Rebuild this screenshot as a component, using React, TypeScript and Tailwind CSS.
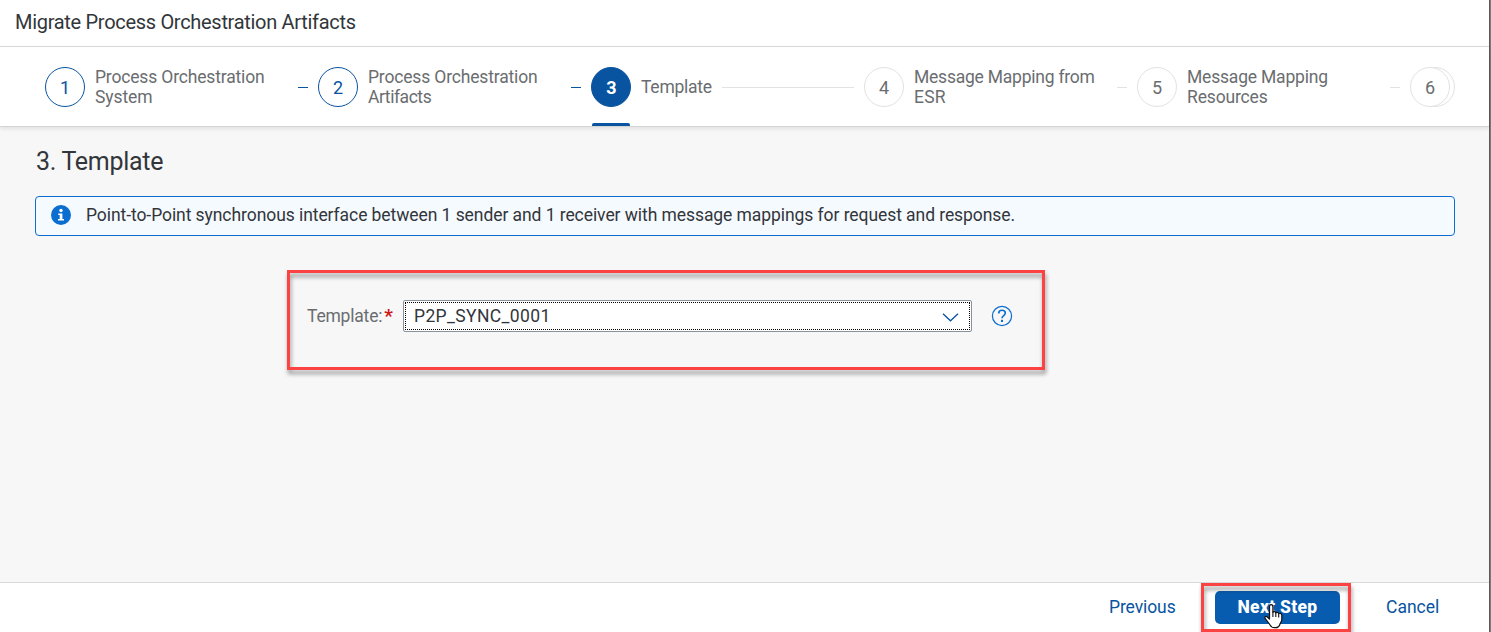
import { clsx } from "clsx";

type StepState = "done" | "current" | "open";

interface Step {
  number: number;
  lines: string[];
  state: StepState;
  tracking: string[];
}

const steps: Step[] = [
  { number: 1, lines: ["Process Orchestration", "System"], state: "done", tracking: ["tracking-[-0.17px]", "tracking-[-0.1px]"] },
  { number: 2, lines: ["Process Orchestration", "Artifacts"], state: "done", tracking: ["tracking-[-0.17px]", "tracking-[-0.45px]"] },
  { number: 3, lines: ["Template"], state: "current", tracking: ["tracking-[-0.25px]"] },
  { number: 4, lines: ["Message Mapping from", "ESR"], state: "open", tracking: ["tracking-[-0.23px]", "tracking-[0.2px]"] },
  { number: 5, lines: ["Message Mapping", "Resources"], state: "open", tracking: ["tracking-[-0.2px]", "tracking-[-0.15px]"] },
];

function StepCircle({ number, state }: { number: number; state: StepState }) {
  return (
    <span
      className={clsx(
        "flex size-10 shrink-0 items-center justify-center rounded-full border pt-px text-[18px]",
        state === "done" && "border-[#0854a0] bg-white text-[#0854a0]",
        state === "current" && "border-[#0854a0] bg-[#0854a0] pl-px font-bold text-white",
        state === "open" && "border-[#e2e2e2] bg-white text-[#6a6d70]",
      )}
    >
      {number}
    </span>
  );
}

function StepItem({ step }: { step: Step }) {
  return (
    <li className="relative flex w-[273px] shrink-0 items-center pr-[10px]">
      <StepCircle number={step.number} state={step.state} />
      <span className="ml-[10px] text-[17.5px] leading-5 whitespace-nowrap text-[#6a6d70]">
        {step.lines.map((line, i) => (
          <span key={line} className={clsx("block", step.tracking[i])}>
            {line}
          </span>
        ))}
      </span>
      <span
        className={clsx(
          "mt-px ml-auto h-px",
          step.number === 3 ? "w-[132px]" : "w-[10px]",
          step.state === "done" ? "bg-[#0854a0]" : "bg-[#e2e2e2]",
        )}
      />
      {step.state === "current" && (
        <span className="absolute top-[56px] left-px h-[3px] w-[38px] rounded-t-[2px] bg-[#0854a0]" />
      )}
    </li>
  );
}

function InfoIcon() {
  return (
    <svg className="mb-[2px] size-5" viewBox="0 0 20 20">
      <circle cx="10" cy="10" r="10" fill="#0a6ed1" />
      <circle cx="10" cy="5.5" r="1.7" fill="#fff" />
      <path d="M7.2 8.4H11.4V14H13V15.6H7V14H8.7V10H7.2Z" fill="#fff" />
    </svg>
  );
}

function HelpIcon() {
  return (
    <svg className="size-[22px]" viewBox="0 0 22 22" fill="none" stroke="#0a6ed1">
      <circle cx="11" cy="11" r="9.6" strokeWidth="1.2" />
      <path d="M7.7 8.4C7.7 6.3 9 5.3 11 5.3C13 5.3 14.3 6.4 14.3 8C14.3 9.5 13.5 10.1 12.5 10.8C11.5 11.5 11 12 11 13.2" strokeWidth="1.6" />
      <rect x="10" y="14.8" width="2" height="2.2" fill="#0a6ed1" stroke="none" />
    </svg>
  );
}

function HandCursor() {
  return (
    <svg className="absolute top-[13px] left-[49px] h-[25px] w-[19px]" viewBox="0 0 19 25">
      <path
        d="M5.5 15V2.8C5.5 1.3 6.2.6 7.2.6S8.9 1.3 8.9 2.8V8.2C9.2 7.4 11.6 7.2 11.8 8.9C12.3 7.9 14.5 8.1 14.7 9.7C15.5 8.8 17.8 9.3 17.8 11.3V15.5C17.8 17.5 16.5 18.6 16 20C15.6 21.5 14.8 23.7 11.5 23.7H10.2C7.2 23.7 6.5 21.7 5.4 20L1.3 14.7C.2 13.2 1.6 11.8 3 12.7Z"
        fill="#fff"
        stroke="#111"
        strokeWidth="1.2"
        strokeLinejoin="round"
      />
      <path d="M8.9 7.5V13M11.8 8.5V13M14.7 9.5V13.5" stroke="#111" strokeWidth="1.1" />
    </svg>
  );
}

export default function App() {
  return (
    <div className="flex h-[632px] w-[1491px] overflow-hidden bg-white font-['Roboto',sans-serif] text-[#32363a]">
      <div className="flex w-[1489px] shrink-0 flex-col">
        <header className="flex h-[47px] shrink-0 items-center border-b border-[#d9d9d9] pb-[2px] pl-[15px]">
          <h1 className="text-[20px] leading-6 tracking-[-0.3px] whitespace-nowrap">
            Migrate Process Orchestration Artifacts
          </h1>
        </header>

        <nav className="z-10 h-[80px] shrink-0 border-b border-[#d4d4d4] bg-white pt-5 pl-[45px] shadow-[0_2px_4px_rgba(0,0,0,0.09)]">
          <ol className="flex h-10">
            {steps.map((step) => (
              <StepItem key={step.number} step={step} />
            ))}
            <li className="flex">
              <span className="z-10">
                <StepCircle number={6} state="open" />
              </span>
              <span className="-ml-[35px] size-10 rounded-full border border-[#e2e2e2]" />
            </li>
          </ol>
        </nav>

        <main className="flex grow flex-col bg-[#f7f7f7] pr-[34px] pl-[35px]">
          <h2 className="mt-[20px] pl-px text-[25px] leading-[30px] tracking-[-0.3px]">3. Template</h2>
          <div className="mt-[19px] flex h-10 items-center rounded-[4px] border border-[#0a6ed1] bg-[#f5faff] pl-[15px]">
            <InfoIcon />
            <p className="ml-[15px] pb-[2px] text-[17.5px] tracking-[-0.07px] whitespace-nowrap">
              Point-to-Point synchronous interface between 1 sender and 1 receiver with message mappings for request and
              response.
            </p>
          </div>

          <form className="relative mt-[34px] ml-[252px] flex h-[100px] w-[758px] items-start pt-[30px] pl-5">
            <label className="flex w-[96px] pt-[4px] text-[17.5px] leading-6 text-[#6a6d70]">
              <span className="tracking-[-0.2px]">Template:</span>
              <span className="ml-[2px] text-[19px] font-bold text-[#cc1919]">*</span>
            </label>
            <div className="h-8 w-[569px] rounded-[2px] border border-[#89919a] bg-white p-px">
              <div className="flex h-full items-center justify-between border border-dotted border-black pr-[10px] pl-2">
                <span className="text-[17.5px] leading-6 tracking-[0.37px]">P2P_SYNC_0001</span>
                <svg className="mt-[3px] h-[9px] w-[17px]" viewBox="0 0 17 9" fill="none" stroke="#0854a0" strokeWidth="1.3">
                  <path d="M1 .8L8.5 7.8L16 .8" />
                </svg>
              </div>
            </div>
            <span className="mt-[5px] ml-[19px]">
              <HelpIcon />
            </span>
            <span className="pointer-events-none absolute inset-0 border-[3px] border-[#fb4343] drop-shadow-[1px_4px_2px_rgba(0,0,0,0.4)]" />
          </form>
        </main>

        <footer className="flex h-[50px] shrink-0 border-t border-[#d9d9d9] bg-white text-[17.5px] text-[#0854a0]">
          <button className="mt-[12px] ml-[1109px] h-6 w-[67px] text-left leading-6 tracking-[-0.1px]">Previous</button>
          <div className="relative ml-[25px] h-[49px] w-[150px] pt-2 pl-[14px]">
            <button className="relative block h-[33px] w-[125px] rounded-[5px] bg-[#085caf] pb-px text-center leading-8 font-extrabold tracking-[0.3px] text-white">
              Next Step
              <HandCursor />
            </button>
            <span className="pointer-events-none absolute inset-0 border-[3px] border-[#fb4343] drop-shadow-[1px_4px_2px_rgba(0,0,0,0.4)]" />
          </div>
          <button className="mt-[12px] ml-[35px] h-6 w-[54px] text-left leading-6">Cancel</button>
        </footer>
      </div>
      <div className="w-[2px] shrink-0 border-l border-[#595959] bg-[#7c7c7c]" />
    </div>
  );
}
